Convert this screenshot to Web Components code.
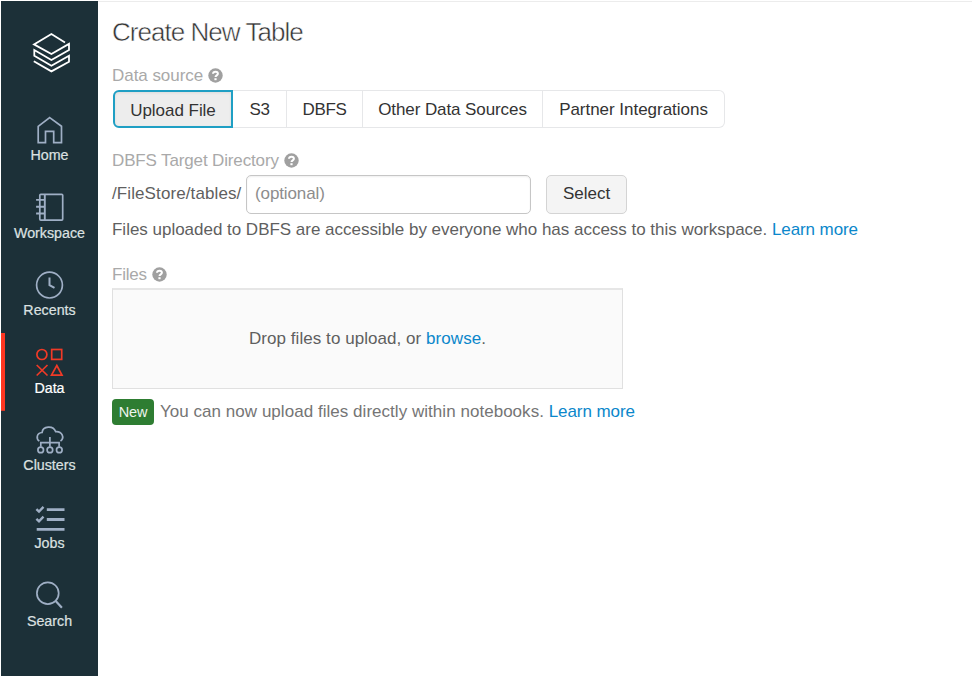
<!DOCTYPE html>
<html lang="en">
<head>
<meta charset="utf-8">
<title>Create New Table</title>
<style>
html,body{margin:0;height:100%;background:#fff;overflow:hidden}
body{font-family:"Liberation Sans",Arial,sans-serif;font-size:17px;color:#5f5f5f}
</style>
</head>
<body>
<app-shell></app-shell>
<script>
const define=(name,html)=>customElements.define(name,class extends HTMLElement{
  constructor(){
    super();
    const t=document.createElement('template');
    t.innerHTML=html;
    this.attachShadow({mode:'open'}).append(t.content.cloneNode(true));
  }
});

define('brand-logo',`<style>:host{display:block;height:99.7px}svg{display:block;overflow:visible}</style>
<svg width="97" height="99.7" viewBox="1 1 97 99.7" fill="none" stroke="#fff" stroke-width="1.8"><path d="M65 42.4L51.4 34 34 44.4 51.4 54 69 43.9V50L51.4 60 34.3 50.1V55.8L51.4 65.8 69 55.8V61.8L51.4 71.4 33.8 61.2"/></svg>`);

const icons={
home:'<path d="M50.2 117.3L62 126V142.3H54.2V131H46V142.3H38.7V126Z"/>',
workspace:'<rect x="40.3" y="194.6" width="22.9" height="25.8" rx="1"/><path d="M45.3 194.6V220.4M36.6 200.2H45M36.6 207H45M36.6 213.8H45" stroke-width="1.9"/>',
recents:'<circle cx="50" cy="285" r="12.9"/><path d="M50 277.4V285L55 287.8" stroke-width="2"/>',
data:'<circle cx="42.4" cy="355" r="5"/><rect x="52.2" y="350" width="10" height="9.9"/><path d="M37.2 365.5L48 376M48 365.5L37.2 376M57.3 366L62.5 375.6H52Z"/>',
clusters:'<path d="M39.8 441.2C36.4 438.8 37 433.2 42.6 432.6C43.2 426 53.8 425.2 56.2 431.8C62.6 431.2 65.4 438 61 441.2M50.4 437.2V446.8M41.3 446.8V442.7H59.6V446.8"/><circle cx="41.2" cy="450" r="2.8"/><circle cx="50.4" cy="450" r="2.8"/><circle cx="59.8" cy="450" r="2.8"/>',
jobs:'<path d="M47.3 509.4H65M47.3 519.2H65M37.2 529H65" stroke-width="2.8"/><path d="M36.9 508.8L39.5 511.3 44 506.6M36.9 518.6L39.5 521.1 44 516.4" stroke-width="2.4"/>',
search:'<circle cx="48.3" cy="593.5" r="10.9"/><path d="M56.2 601.3L62.4 608" stroke-width="2.2"/>'};
const order=Object.keys(icons);
customElements.define('nav-item',class extends HTMLElement{
  connectedCallback(){
    const k=this.getAttribute('icon');
    this.attachShadow({mode:'open'}).innerHTML=`<style>
:host{display:flex;flex-direction:column;align-items:center;box-sizing:border-box;height:77.6px;padding-top:12px;font-size:14.25px;color:#dce1e1}
:host([active]){color:#fff;background:linear-gradient(#ff3621,#ff3621) left/4px 100% no-repeat}
svg{display:block;overflow:visible;stroke:#9fafc5;flex:none}
:host([active]) svg{stroke:#f03a27}
span{line-height:18px;margin-top:-.6px;-webkit-text-stroke:.2px}
</style><svg width="41" height="34" viewBox="29.5 ${112.7+77.6*order.indexOf(k)} 41 34" fill="none" stroke-width="1.7">${icons[k]}</svg><span><slot></slot></span>`;
  }
});

define('side-bar',`<style>:host{display:block;box-sizing:border-box;width:97px;height:675px;background:#1c3038}</style>
<brand-logo></brand-logo>
<nav-item icon="home">Home</nav-item><nav-item icon="workspace">Workspace</nav-item><nav-item icon="recents">Recents</nav-item><nav-item icon="data" active>Data</nav-item><nav-item icon="clusters">Clusters</nav-item><nav-item icon="jobs">Jobs</nav-item><nav-item icon="search">Search</nav-item>`);

define('field-label',`<style>:host{display:flex;align-items:center;gap:5px;height:24px;line-height:24px;color:#a9a9a9}svg{display:block;margin-top:-1px}</style>
<span><slot></slot></span><svg width="15" height="15" viewBox="0 0 15 15"><circle cx="7.5" cy="7.5" r="7.2" fill="#a0a0a0"/><path d="M5 5.7C5.2 2.9 9.9 3 9.9 5.7C9.9 7.4 7.5 7.3 7.5 9.1" fill="none" stroke="#fff" stroke-width="2"/><rect x="6.4" y="10.2" width="2.2" height="2" fill="#fff"/></svg>`);

define('tab-button',`<style>:host{display:flex;align-items:center;justify-content:center;box-sizing:border-box;height:38px;border:1px solid #e6e7e9;border-left-width:0;padding-top:1px;color:#333;white-space:nowrap}
:host([last]){border-radius:0 6px 6px 0}
:host([selected]){border:2px solid #1f9fc4;border-radius:6px 0 0 6px;background:#ededed;padding-top:3px;box-shadow:inset 0 1px 3px #0001}</style><slot></slot>`);

define('source-tabs',`<style>:host{display:flex;padding-left:1px}</style>
<tab-button selected style="width:120px;letter-spacing:-.04px">Upload File</tab-button><tab-button style="width:54px;letter-spacing:-.3px">S3</tab-button><tab-button style="width:76px;letter-spacing:-.3px">DBFS</tab-button><tab-button style="width:180px;letter-spacing:-.09px">Other Data Sources</tab-button><tab-button last style="width:182px;letter-spacing:-.03px">Partner Integrations</tab-button>`);

define('text-link',`<style>:host{display:inline;color:#0b87cb}</style><slot></slot>`);

define('target-path',`<style>:host{display:flex;align-items:center;height:39px;white-space:nowrap}
span{width:134px;letter-spacing:.1px;padding-bottom:2px}
.in{box-sizing:border-box;width:285px;height:39px;border:1.5px solid #c6c6c6;border-radius:5px;box-shadow:inset 0 1px 2px #0001;padding-left:8px;line-height:36px;color:#8d8d8d;letter-spacing:-.12px}
.btn{box-sizing:border-box;margin-left:15px;width:81px;height:39px;border:1px solid #d4d4d4;border-radius:5px;background:#f4f4f4;text-align:center;line-height:36px;color:#333}</style>
<span>/FileStore/tables/</span><div class="in">(optional)</div><div class="btn">Select</div>`);

define('drop-zone',`<style>:host{display:flex;align-items:center;justify-content:center;box-sizing:border-box;width:511px;height:101px;border:1px solid #e0e0e0;border-top:2px solid #e6e6e6;background:#fafafa;letter-spacing:.055px;white-space:pre}</style><slot></slot>`);

define('new-badge',`<style>:host{display:flex;align-items:center;justify-content:center;width:42px;height:26px;border-radius:4px;background:#2e7d32;color:#eef5ee;font-size:14.5px;letter-spacing:-.2px}</style><slot></slot>`);

define('create-table',`<style>
:host{display:block;padding:14px 0 0 14px}
h1{margin:0;height:34px;line-height:33px;font-size:26px;font-weight:400;letter-spacing:-.96px;color:#333;-webkit-text-stroke:.5px #fff}
.s{margin-top:14px}
source-tabs{margin-top:2px}
.t{margin-top:21px}
target-path{margin-top:2px}
p{margin:4px 0 0;height:24px;line-height:24px;white-space:nowrap;letter-spacing:-.018px}
.f{margin-top:21px}
drop-zone{margin-top:1px}
.n{display:flex;align-items:center;gap:6px;margin-top:10px;color:#757575;height:26px;line-height:24px;white-space:nowrap;letter-spacing:.036px}
.n text-link{letter-spacing:-.08px}
</style>
<h1>Create New Table</h1>
<field-label class="s" style="letter-spacing:-.05px">Data source</field-label>
<source-tabs></source-tabs>
<field-label class="t" style="letter-spacing:-.14px">DBFS Target Directory</field-label>
<target-path></target-path>
<p>Files uploaded to DBFS are accessible by everyone who has access to this workspace. <text-link style="letter-spacing:-.09px">Learn more</text-link></p>
<field-label class="f" style="letter-spacing:-.25px">Files</field-label>
<drop-zone><span>Drop files to upload, or <text-link>browse</text-link>.</span></drop-zone>
<div class="n"><new-badge>New</new-badge><span>You can now upload files directly within notebooks. <text-link>Learn more</text-link></span></div>`);

define('app-shell',`<style>:host{display:flex;box-sizing:border-box;height:677px;padding-left:1px;background:#fff}
side-bar{flex:none;margin-top:1px}
create-table{flex:1;margin-top:1px;height:675px;box-sizing:border-box;border-top:1px solid #ececec}</style>
<side-bar></side-bar><create-table></create-table>`);
</script>
</body>
</html>
